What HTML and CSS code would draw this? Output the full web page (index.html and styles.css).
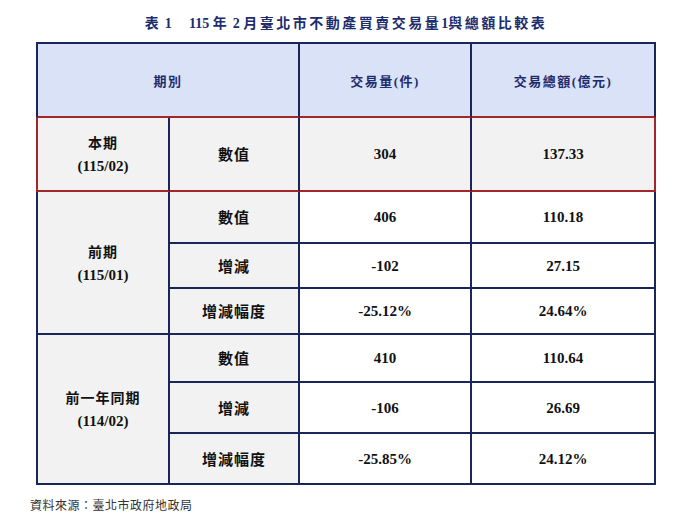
FILE: index.html
```html
<!DOCTYPE html>
<html lang="zh-Hant">
<head>
<meta charset="utf-8">
<link rel="stylesheet" href="styles.css">
</head>
<body>
<div class="page">
  <div class="title"><span class="cjk-t">表</span> 1　 115 <span class="cjk-t">年</span> 2 <span class="cjk-t">月臺北市不動產買賣交易量</span>1<span class="cjk-t">與總額比較表</span></div>
  <table class="cmp">
    <colgroup>
      <col class="c1"><col class="c2"><col class="c3"><col class="c4">
    </colgroup>
    <thead>
      <tr class="hd">
        <th colspan="2" class="first">期別</th>
        <th>交易量(件)</th>
        <th class="last">交易總額(億元)</th>
      </tr>
    </thead>
    <tbody>
      <tr class="cur">
        <td class="lab first"><div class="cjk">本期</div><div>(115/02)</div></td>
        <td class="lab cjk">數值</td>
        <td class="num">304</td>
        <td class="num last">137.33</td>
      </tr>
      <tr class="r1">
        <td class="lab first" rowspan="3"><div class="cjk">前期</div><div>(115/01)</div></td>
        <td class="lab cjk">數值</td>
        <td class="num">406</td>
        <td class="num last">110.18</td>
      </tr>
      <tr class="r2">
        <td class="lab cjk">增減</td>
        <td class="num">-102</td>
        <td class="num last">27.15</td>
      </tr>
      <tr class="r3">
        <td class="lab cjk">增減幅度</td>
        <td class="num">-25.12%</td>
        <td class="num last">24.64%</td>
      </tr>
      <tr class="r4">
        <td class="lab first" rowspan="3"><div class="cjk">前一年同期</div><div>(114/02)</div></td>
        <td class="lab cjk">數值</td>
        <td class="num">410</td>
        <td class="num last">110.64</td>
      </tr>
      <tr class="r5">
        <td class="lab cjk">增減</td>
        <td class="num">-106</td>
        <td class="num last">26.69</td>
      </tr>
      <tr class="r6">
        <td class="lab cjk">增減幅度</td>
        <td class="num">-25.85%</td>
        <td class="num last">24.12%</td>
      </tr>
    </tbody>
  </table>
  <div class="source">資料來源：臺北市政府地政局</div>
</div>
</body>
</html>
```

FILE: styles.css
```css
html, body {
  margin: 0;
  padding: 0;
  background: #ffffff;
}
.page {
  padding: 12px 0 0 36px;
  width: 620px;
  font-family: "Liberation Serif", "Noto Sans CJK TC", serif;
}
.title {
  text-align: center;
  font-size: 14px;
  line-height: 20px;
  font-weight: bold;
  color: #1e2d6e;
  margin-bottom: 8px;
  white-space: pre;
}
.cjk-t {
  font-family: "Noto Sans CJK TC", sans-serif;
  letter-spacing: 2.5px;
}
.cmp {
  border-collapse: separate;
  border-spacing: 0;
  table-layout: fixed;
  width: 620px;
  border-top: 2px solid #1b2658;
}
.c1 { width: 134px; }
.c2 { width: 130px; }
.c3 { width: 172px; }
.c4 { width: 184px; }
.cmp th, .cmp td {
  border-right: 2px solid #1b2658;
  border-bottom: 2px solid #1b2658;
  padding: 0;
  text-align: center;
  vertical-align: middle;
}
.cmp .first {
  border-left: 2px solid #1b2658;
}
.cmp th {
  background: #dae2f7;
  color: #1e2d6e;
  font-family: "Liberation Serif", "Noto Sans CJK TC", serif;
  font-size: 13px;
  font-weight: bold;
  letter-spacing: 1.5px;
  height: 72px;
  border-bottom-color: #a3262b;
}
.cmp td {
  font-size: 15px;
  font-weight: bold;
  color: #111111;
  line-height: 24px;
}
.cjk {
  font-family: "Noto Sans CJK TC", sans-serif;
  font-size: 14px;
  letter-spacing: 1px;
}
.lab { background: #f2f2f3; }
.num { background: #ffffff; }
.cmp .cur td {
  background: #f2f2f3;
  height: 72px;
  border-bottom-color: #a3262b;
}
.cmp .cur td.first { border-left-color: #a3262b; }
.cmp .cur td.last { border-right-color: #a3262b; }
.r1 td { height: 50px; }
.r2 td { height: 43px; }
.r3 td { height: 44px; }
.r4 td { height: 46px; }
.r5 td { height: 49px; }
.r6 td { height: 49px; }
.source {
  margin-top: 12px;
  margin-left: -6px;
  font-family: "Noto Sans CJK TC", sans-serif;
  font-size: 12px;
  letter-spacing: 0.5px;
  color: #333333;
  line-height: 16px;
}
```
